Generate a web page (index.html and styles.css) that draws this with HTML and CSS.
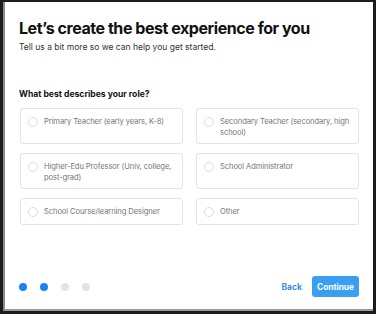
FILE: index.html
```html
<!DOCTYPE html>
<html>
<head>
<meta charset="utf-8">
<link rel="stylesheet" href="styles.css">
</head>
<body>
<div class="frame">
  <div class="content">
    <h1 class="title">Let’s create the best experience for you</h1>
    <p class="subtitle">Tell us a bit more so we can help you get started.</p>
    <h2 class="question">What best describes your role?</h2>
    <div class="options">
      <div class="option"><span class="radio"></span><span class="label">Primary Teacher (early years, K-8)</span></div>
      <div class="option"><span class="radio"></span><span class="label">Secondary Teacher (secondary, high school)</span></div>
      <div class="option"><span class="radio"></span><span class="label">Higher-Edu Professor (Univ, college, post-grad)</span></div>
      <div class="option"><span class="radio"></span><span class="label">School Administrator</span></div>
      <div class="option"><span class="radio"></span><span class="label">School Course/learning Designer</span></div>
      <div class="option"><span class="radio"></span><span class="label">Other</span></div>
    </div>
    <div class="footer">
      <div class="dots">
        <span class="dot active"></span>
        <span class="dot active"></span>
        <span class="dot"></span>
        <span class="dot"></span>
      </div>
      <div class="actions">
        <span class="back">Back</span>
        <span class="continue">Continue</span>
      </div>
    </div>
  </div>
</div>
</body>
</html>
```

FILE: styles.css
```css
html, body {
  margin: 0;
  padding: 0;
  background: #fff;
}
.frame {
  width: 376px;
  height: 314px;
  box-sizing: border-box;
  border-top: 2px solid #1c1c1c;
  border-left: 3px solid #1c1c1c;
  border-right: 3px solid #1c1c1c;
  border-bottom: 3px solid #1c1c1c;
  box-shadow: inset 2px 0 0 #8a8a8a, inset 0 -2px 0 #9a9a9a;
  font-family: Inter, "Noto Sans", sans-serif;
  background: #fff;
}
.content {
  padding: 0 14px 0 16px;
  height: 100%;
  box-sizing: border-box;
  display: flex;
  flex-direction: column;
}
.title {
  margin: 15px 0 0 0;
  font-size: 16px;
  line-height: 22px;
  font-weight: 700;
  color: #111;
  letter-spacing: -0.45px;
}
.subtitle {
  margin: 2px 0 0 0;
  font-size: 8.5px;
  line-height: 13px;
  color: #333;
}
.question {
  margin: 34px 0 0 0;
  font-size: 8.6px;
  line-height: 13px;
  font-weight: 700;
  color: #111;
}
.options {
  margin-top: 7px;
  margin-left: 1px;
  display: grid;
  grid-template-columns: 163px 163px;
  column-gap: 13px;
  row-gap: 9px;
}
.option {
  border: 1px solid #e3e3e3;
  border-radius: 3px;
  box-sizing: border-box;
  min-height: 27px;
  padding: 7px 4px 5px 7px;
  display: flex;
  align-items: flex-start;
  gap: 6px;
}
.radio {
  flex: none;
  width: 10px;
  height: 10px;
  border: 1px solid #dcdcdc;
  border-radius: 50%;
  box-sizing: border-box;
  margin-top: 1px;
}
.label {
  font-size: 7.6px;
  line-height: 11px;
  letter-spacing: -0.1px;
  color: #777;
}
.footer {
  margin-top: auto;
  margin-bottom: 14px;
  display: flex;
  align-items: center;
  justify-content: space-between;
}
.dots {
  display: flex;
  gap: 13px;
  padding-left: 0;
}
.dot {
  width: 8px;
  height: 8px;
  border-radius: 50%;
  background: #e3e3e3;
}
.dot.active {
  background: #1a84f2;
}
.actions {
  display: flex;
  align-items: center;
  gap: 10px;
}
.back {
  font-size: 8.5px;
  font-weight: 700;
  color: #3a8fe8;
}
.continue {
  width: 47px;
  height: 21px;
  box-sizing: border-box;
  display: flex;
  align-items: center;
  justify-content: center;
  background: #3a9ff2;
  border-radius: 3px;
  color: #fff;
  font-size: 8.3px;
  font-weight: 700;
}
```
